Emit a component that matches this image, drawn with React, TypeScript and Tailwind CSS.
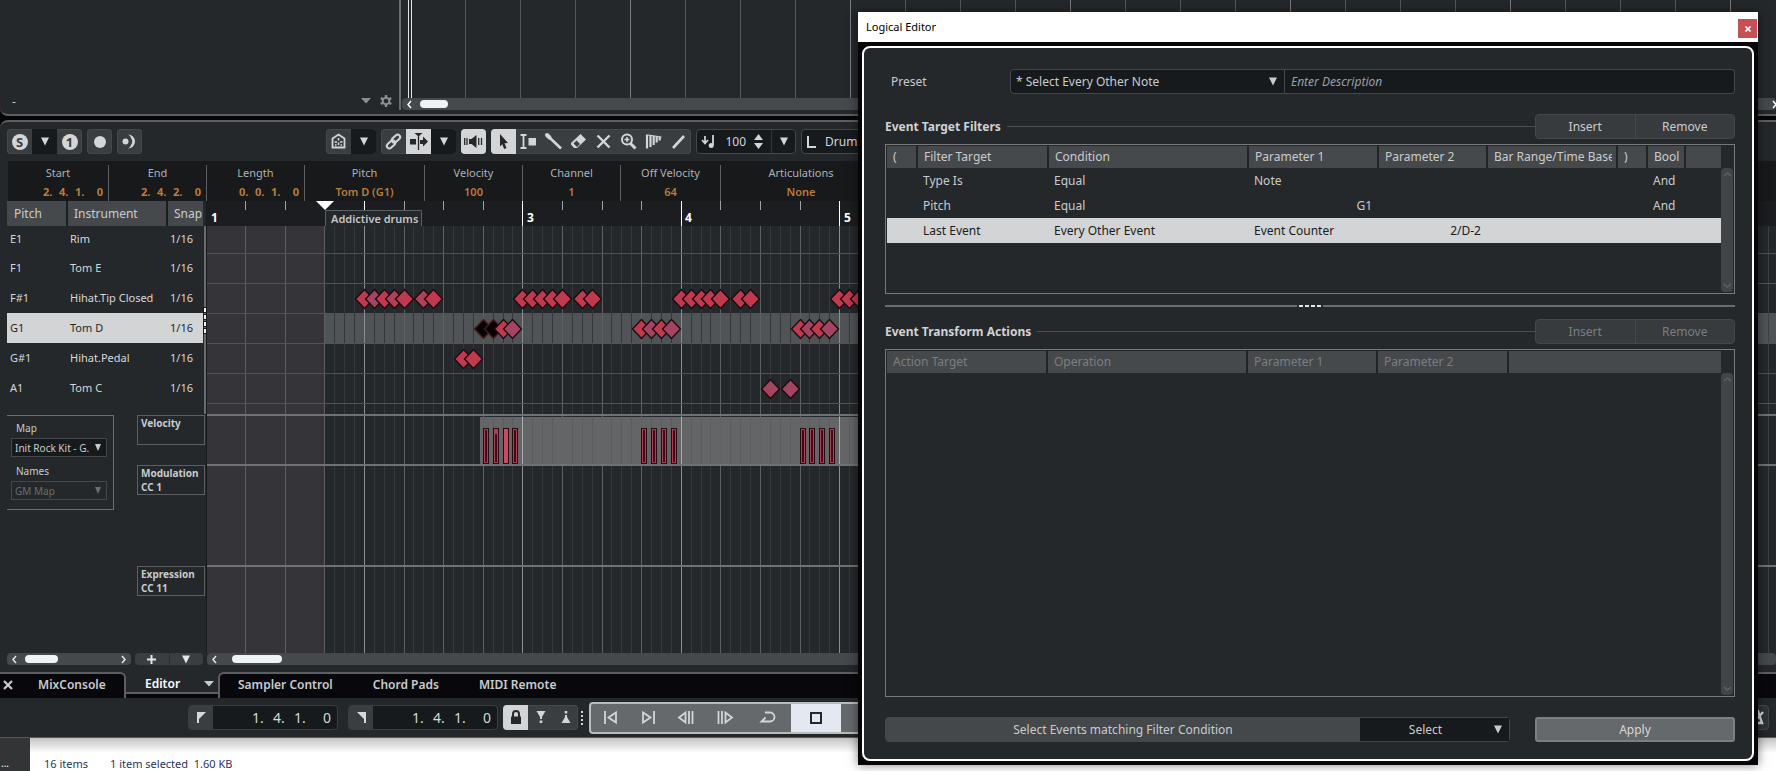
import React from "react";

const BEAT = 39.6;
const STEP = BEAT / 4;
const ORIGIN = -1.5;
const PART_START = 118;

const beatX = (beat: number) => Math.round(ORIGIN + beat * BEAT);
const stepX = (bar: number, step: number) => Math.round(ORIGIN + (bar - 1) * BEAT * 4 + step * STEP);

function Caret({ className = "" }: { className?: string }) {
  return (
    <svg className={"pointer-events-none shrink-0 " + className} width="8" height="9" viewBox="0 0 8 9" fill="currentColor" aria-hidden="true">
      <path d="M0 .5h8L4 8.5z" />
    </svg>
  );
}

function Chevron({ dir }: { dir: "left" | "right" | "up" | "down" }) {
  const d = {
    left: "M6 1L3 4.500L6 8",
    right: "M3 1l3 3.500L3 8",
    up: "M1 6l3.500-3L8 6",
    down: "M1 3l3.500 3L8 3",
  }[dir];
  return (
    <svg width="9" height="9" viewBox="0 0 9 9" fill="none" stroke="currentColor" strokeWidth="1.5" aria-hidden="true">
      <path d={d} />
    </svg>
  );
}

function Tool({
  label,
  active = false,
  dark = false,
  children,
}: {
  label: string;
  active?: boolean;
  dark?: boolean;
  children: React.ReactNode;
}) {
  const tone = active ? "bg-[#d3d5d7] text-[#24282b]" : dark ? "bg-[#171a1d] text-[#d3d5d7]" : "text-[#d3d5d7]";
  return (
    <button type="button" aria-label={label} className={"flex h-full flex-1 items-center justify-center " + tone}>
      {children}
    </button>
  );
}

function Group({ width, children }: { width: string; children: React.ReactNode }) {
  return (
    <div className={"flex h-[25px] shrink-0 overflow-hidden rounded-sm bg-[#3a3e41] ring-1 ring-inset ring-[#44484b] " + width}>
      {children}
    </div>
  );
}

const svgProps = { width: 19, height: 19, viewBox: "0 0 19 19", fill: "none", stroke: "currentColor", strokeWidth: 2, "aria-hidden": true } as const;

function EditorToolbar() {
  return (
    <div className="flex h-[39px] items-center gap-[5px] pl-[7px]">
      <Group width="w-[75px]">
        <Tool label="Solo editor">
          <span className="flex size-4 items-center justify-center rounded-full bg-[#d3d5d7] text-[13px] leading-4 font-bold text-[#3a3e41]">S</span>
        </Tool>
        <Tool label="Solo options" dark><Caret /></Tool>
        <Tool label="Record in editor">
          <span className="flex size-4 items-center justify-center rounded-full bg-[#d3d5d7] text-[13px] leading-4 font-bold text-[#3a3e41]">1</span>
        </Tool>
      </Group>
      <Group width="w-[25px]">
        <Tool label="Record"><span className="size-3 rounded-full bg-[#d3d5d7]" /></Tool>
      </Group>
      <Group width="w-[25px]">
        <Tool label="Retrospective record">
          <svg {...svgProps}>
            <path d="M8 2.500a7 7 0 1 1 0 14a5 5 0 0 0 3-3.500a6 6 0 0 0 0-7a5 5 0 0 0-3-3.500z" fill="currentColor" stroke="none" />
            <circle cx="5.500" cy="9.500" r="3" fill="currentColor" stroke="none" />
          </svg>
        </Tool>
      </Group>
      <div className="w-[174px]" />
      <Group width="w-[50px]">
        <Tool label="Acoustic feedback">
          <svg {...svgProps}><path d="M3.500 15.500v-9l6-4 6 4v9z" strokeWidth="1.800" /><path d="M9.500 6v2.500M9.500 10.500v2.500M5.500 10h2.500M11 10h2.500M6 13h1.500M11.500 13h1.500" strokeWidth="1.600" /></svg>
        </Tool>
        <Tool label="Feedback options" dark><Caret /></Tool>
      </Group>
      <Group width="w-[75px]">
        <Tool label="Link">
          <svg {...svgProps}><g transform="rotate(-42 9.500 9.500)"><rect x="1" y="7.500" width="9.500" height="5" rx="2.500" /><rect x="8.500" y="6.500" width="9.500" height="5" rx="2.500" /></g></svg>
        </Tool>
        <Tool label="Auto-scroll" active>
          <svg {...svgProps}><path d="M1 7h6v5.500H1zM11 8h3V4.500l5 5-5 5V12h-3zM5.500 1h8L9.500 4.500z" fill="currentColor" stroke="none" /><path d="M9.500 2v16" strokeWidth="1.300" /></svg>
        </Tool>
        <Tool label="Auto-scroll options" dark><Caret /></Tool>
      </Group>
      <Group width="w-[25px]">
        <Tool label="Acoustic feedback on" active>
          <svg {...svgProps}><path d="M5 7h2.500L12.500 3v13l-5-4H5z" fill="currentColor" stroke="none" /><path d="M.700 6v7M3 6v7M14.700 6v7M17.500 6v7" strokeWidth="1.300" /></svg>
        </Tool>
      </Group>
      <Group width="w-[200px]">
        <Tool label="Object selection" active>
          <svg {...svgProps}><path d="M6 2l8 9-3.500.300 2 4.700-2.300 1-2-4.800L6 14.500z" fill="currentColor" stroke="none" /></svg>
        </Tool>
        <Tool label="Trim">
          <svg {...svgProps}><path d="M1.500 3h6M1.500 16h6M4.500 3v13" strokeWidth="1.800" /><path d="M9.500 6h7.500v7.500H9.500z" fill="currentColor" stroke="none" /></svg>
        </Tool>
        <Tool label="Drumstick">
          <svg {...svgProps}><path d="M3 3l2.500 2.500" strokeWidth="4" strokeLinecap="round" /><path d="M6 6l11 10.500" strokeWidth="2.600" /></svg>
        </Tool>
        <Tool label="Erase">
          <svg {...svgProps}><path d="M11.500 2L17 7.500L8 16H5L2 12.500V11z" fill="currentColor" stroke="none" /><path d="M7.500 8.500l3.500 3.500-3 3-3.500-3.500z" fill="#3a3e41" stroke="none" /></svg>
        </Tool>
        <Tool label="Mute"><svg {...svgProps}><path d="M3.500 3.500l12 12M15.500 3.500l-12 12" strokeWidth="2.400" /></svg></Tool>
        <Tool label="Zoom">
          <svg {...svgProps}><circle cx="8" cy="7.500" r="5" /><path d="M11.500 11.500l5 5" strokeWidth="3" /><path d="M8 5v5M5.500 7.500h5" strokeWidth="1.600" /></svg>
        </Tool>
        <Tool label="Time warp">
          <svg {...svgProps}><path d="M3 3v13.500M6.500 3v12M9.700 4v9M12.700 4.500v6M15.700 5v3.500" strokeWidth="2.200" /><path d="M2 3h2l13.500 2" strokeWidth="1.200" /></svg>
        </Tool>
        <Tool label="Line"><svg {...svgProps}><path d="M4 16L15 4" strokeWidth="2.600" /></svg></Tool>
      </Group>
      <div className="flex h-[25px] w-[100px] shrink-0 items-center rounded-sm border border-[#44484b] bg-[#171a1d] text-[#d3d5d7]">
        <svg {...svgProps} className="ml-[3px]"><path d="M5 4v6M2 8l3 3.500L8 8" strokeWidth="1.700" /><path d="M13 3v10" strokeWidth="1.800" /><circle cx="11.200" cy="13.500" r="2.500" fill="currentColor" stroke="none" /></svg>
        <input aria-label="Insert velocity" defaultValue="100" className="ml-px w-[26px] bg-transparent text-right text-[12px] leading-5 outline-none" />
        <svg className="ml-2" width="9" height="15" viewBox="0 0 9 15" fill="currentColor" aria-hidden="true"><path d="M4.500 0L9 6H0zM4.500 15L0 9h9z" /></svg>
        <button type="button" aria-label="Velocity presets" className="ml-auto flex h-full w-6 items-center justify-center border-l border-[#33373a]"><Caret /></button>
      </div>
      <div className="flex h-[25px] w-[160px] shrink-0 items-center gap-2 rounded-sm border border-[#44484b] bg-[#171a1d] pl-1 text-[#d3d5d7]">
        <svg width="11" height="14" viewBox="0 0 11 14" fill="none" stroke="currentColor" strokeWidth="2" aria-hidden="true"><path d="M2 1v11h8" /></svg>
        <span className="text-[12px]">Drum</span>
      </div>
    </div>
  );
}

function Position({ parts, cell }: { parts: string[]; cell: string }) {
  return (
    <span className="flex">
      {parts.map((p, i) => (
        <span key={i} className={cell}>{p}</span>
      ))}
    </span>
  );
}

function InfoLine() {
  const positions = [
    { label: "Start", parts: ["2.", "4.", "1."], width: "w-[101px]" },
    { label: "End", parts: ["2.", "4.", "2."], width: "w-[98px]" },
    { label: "Length", parts: ["0.", "0.", "1."], width: "w-[98px]" },
  ];
  const values = [
    { label: "Pitch", value: "Tom D (G1)", width: "w-[120px]" },
    { label: "Velocity", value: "100", width: "w-[98px]" },
    { label: "Channel", value: "1", width: "w-[98px]" },
    { label: "Off Velocity", value: "64", width: "w-[100px]" },
    { label: "Articulations", value: "None", width: "w-[161px]" },
  ];
  return (
    <div className="ml-2 flex h-10 bg-[#17191b] pt-1 text-[11px] leading-4 text-[#aeb1b3]">
      {positions.map((p) => (
        <div key={p.label} className={"flex shrink-0 flex-col gap-[3px] border-r border-[#5d6062] " + p.width}>
          <span className="text-center">{p.label}</span>
          <span className="flex justify-end pr-[5px] font-bold text-[#bd7c3a]">
            <Position parts={p.parts} cell="w-4" />
            <span className="w-3 text-right">0</span>
          </span>
        </div>
      ))}
      {values.map((v) => (
        <div key={v.label} className={"flex shrink-0 flex-col gap-[3px] border-r border-[#5d6062] text-center " + v.width}>
          <span>{v.label}</span>
          <span className="font-semibold text-[#bd7c3a]">{v.value}</span>
        </div>
      ))}
    </div>
  );
}

const drums = [
  ["E1", "Rim"],
  ["F1", "Tom E"],
  ["F#1", "Hihat.Tip Closed"],
  ["G1", "Tom D"],
  ["G#1", "Hihat.Pedal"],
  ["A1", "Tom C"],
];

function DrumList() {
  return (
    <table className="w-[196px] table-fixed self-start border-separate border-spacing-0 text-left text-[11px]">
      <colgroup>
        <col className="w-[61px]" />
        <col className="w-[100px]" />
        <col className="w-[35px]" />
      </colgroup>
      <thead>
        <tr className="h-[25px] text-[12px] leading-5 text-[#c9cbcd]">
          <th className="border-r-2 border-[#1c1f22] bg-[#46494c] p-0 pl-[7px] font-normal">Pitch</th>
          <th className="border-r-2 border-[#1c1f22] bg-[#46494c] p-0 pl-[6px] font-normal">Instrument</th>
          <th className="overflow-hidden bg-[#46494c] p-0 pl-[6px] font-normal whitespace-nowrap">Snap</th>
        </tr>
      </thead>
      <tbody>
        {drums.map(([pitch, name], i) => (
          <tr key={pitch} className={(i === 0 ? "h-[27px] " : "h-[30px] ") + (pitch === "G1" ? "bg-[#d3d4d5] text-[#24282b]" : "text-[#d6d8d9]")}>
            <td className="p-0 pl-[3px]">{pitch}</td>
            <td className="p-0 pl-[2px] whitespace-nowrap">{name}</td>
            <td className="p-0 pl-[2px]">1/16</td>
          </tr>
        ))}
      </tbody>
    </table>
  );
}

function GridLines({ height, dark = false }: { height: number; dark?: boolean }) {
  const steps = [];
  for (let k = 13; k < 156; k++) {
    if (k % 4 === 0) continue;
    steps.push(Math.round(ORIGIN + k * STEP));
  }
  const beats = [];
  for (let k = 1; k < 39; k++) beats.push(k);
  return (
    <g shapeRendering="crispEdges">
      {steps.map((x) => <rect key={x} x={x} y="0" width="1" height={height} fill={dark ? "#33373a" : "#35393c"} />)}
      {beats.map((k) => <rect key={k} x={beatX(k)} y="0" width="1" height={height} fill={k % 4 === 0 ? "#8b8e90" : "#5c6062"} />)}
      <rect x="1561" y="0" width="1" height={height} fill="#3d4143" />
    </g>
  );
}

function Ruler() {
  const beats = [];
  for (let k = 1; k < 20; k++) beats.push(k);
  return (
    <svg className="block h-[25px] w-full shrink-0 bg-[#1b1d20]" aria-label="Ruler">
      <g shapeRendering="crispEdges">
        {beats.map((k) => {
          if (k === 3) return null;
          const bar = k % 4 === 0 && k > 4;
          return <rect key={k} x={beatX(k)} y="0" width="1" height={bar ? 25 : 9} fill={k % 4 === 0 ? "#fff" : "#9fa2a4"} />;
        })}
      </g>
      <path d="M109 0h18l-9 9z" fill="#fff" />
      <path d="M118.500 25V9.500h96V25" fill="#24282b" stroke="#5c6062" />
      <text x="124" y="22" className="text-[11px] font-semibold" fill="#c3c5c7">Addictive drums</text>
      <g className="text-[12px] font-bold" fill="#fff">
        <text x="4" y="21">1</text>
        <text x="320" y="21">3</text>
        <text x="478" y="21">4</text>
        <text x="637" y="21">5</text>
      </g>
    </svg>
  );
}

const RED = "#c03a4f";
const PLUM = "#a34463";
type Note = { x: number; y: number; fill: string };

const notes: Note[] = [];
[2, 3, 4, 5].forEach((bar) =>
  [0, 1, 2, 3, 4, 6, 7].forEach((s) =>
    notes.push({ x: stepX(bar, s), y: 73, fill: bar === 2 && s === 1 ? PLUM : bar === 2 && (s === 3 || s === 6) ? "#b03f58" : RED }),
  ),
);
[2, 3, 4].forEach((bar) =>
  [12, 13, 14, 15].forEach((s) =>
    notes.push({ x: stepX(bar, s), y: 103, fill: bar === 2 && s < 14 ? "#080404" : s % 2 === 0 ? RED : PLUM }),
  ),
);
[10, 11].forEach((s) => notes.push({ x: stepX(2, s), y: 133, fill: RED }));
[9, 11].forEach((s) => notes.push({ x: stepX(4, s), y: 163, fill: PLUM }));

function NoteGrid() {
  return (
    <svg className="block h-[188px] w-full shrink-0 bg-[#24282b]" aria-label="Drum notes">
      <rect width={PART_START} height="188" fill="#353539" />
      <GridLines height={188} />
      <g shapeRendering="crispEdges">
        {[27, 57, 87, 117, 147, 177].map((y) => <rect key={y} y={y} width="100%" height="1" fill="#505457" />)}
      </g>
      <svg x={PART_START} y="87" width="100%" height="30">
        <rect width="100%" height="30" fill="#505456" />
        <g transform={`translate(${-PART_START} 0)`}><GridLines height={30} dark /></g>
      </svg>
      {notes.map((n, i) => (
        <path
          key={i}
          d={`M${n.x - 8.5} ${n.y}L${n.x + 0.5} ${n.y - 9.5}L${n.x + 9.5} ${n.y}L${n.x + 0.5} ${n.y + 9.5}z`}
          fill={n.fill}
          stroke={n.fill === "#080404" ? "#4a1a22" : "#1d0a0e"}
          strokeWidth="1.3"
        />
      ))}
    </svg>
  );
}

function VelocityLane() {
  const bars: { x: number; kind: "hollow" | "split" | "solid" }[] = [];
  [2, 3, 4].forEach((bar) =>
    [12, 13, 14, 15].forEach((s) =>
      bars.push({ x: stepX(bar, s), kind: bar === 2 && s === 13 ? "split" : bar === 2 && s === 14 ? "solid" : "hollow" }),
    ),
  );
  return (
    <svg className="block h-12 w-full shrink-0 bg-[#24282b]" aria-label="Velocity">
      <rect width={PART_START} height="48" fill="#353539" />
      <GridLines height={48} />
      <rect x="273" y="1" width="1220" height="47" fill="#646567" />
      <g opacity="0.200"><svg x="273" width="1220" height="48"><g transform="translate(-273 0)"><GridLines height={48} /></g></svg></g>
      <g fill="#a9abac" shapeRendering="crispEdges">
        {[8, 12, 16].map((k) => <rect key={k} x={beatX(k)} y="1" width="1" height="47" />)}
      </g>
      <g shapeRendering="crispEdges">
        {bars.map((b) => (
          <g key={b.x}>
            <rect x={b.x} y="12" width="6" height="36" fill="#2a0a10" />
            <rect x={b.x + 1} y="13" width="4" height="34" fill="#b03f54" />
            {b.kind === "solid" && <rect x={b.x + 1} y="13" width="4" height="34" fill="#cc4a62" />}
            {b.kind !== "solid" && <rect x={b.x + 2} y={b.kind === "split" ? 18 : 14} width="2" height={b.kind === "split" ? 28 : 32} fill="#3c0c18" />}
          </g>
        ))}
      </g>
    </svg>
  );
}

function EmptyLane({ className }: { className: string }) {
  return (
    <svg className={"block w-full bg-[#24282b] " + className} aria-hidden="true">
      <rect width={PART_START} height="100%" fill="#353539" />
      <GridLines height={400} />
    </svg>
  );
}

function SmallSelect({ id, label, value, disabled = false }: { id: string; label: string; value: string; disabled?: boolean }) {
  return (
    <div className="flex flex-col">
      <label htmlFor={id} className="pt-[2px] pl-[5px] text-[10px] leading-5 text-[#c9cbcd]">{label}</label>
      <div className={"relative flex h-[19px] items-center border border-[#44484b] " + (disabled ? "text-[#6b6e70]" : "bg-[#171a1d] text-[#c9cbcd]")}>
        <select id={id} disabled={disabled} className="w-full appearance-none bg-transparent pl-[3px] text-[10px] leading-4 outline-none">
          <option>{value}</option>
        </select>
        <svg className="pointer-events-none absolute right-[5px]" width="6" height="7" viewBox="0 0 6 7" fill="currentColor" aria-hidden="true"><path d="M0 0h6L3 7z" /></svg>
      </div>
    </div>
  );
}

function LaneLabel({ className, title, sub = "" }: { className: string; title: string; sub?: string }) {
  return (
    <div className={className}>
      <div className="h-[30px] border border-[#5c6062] pl-[3px] text-[10px] leading-[14px] font-bold whitespace-nowrap text-[#c9cbcd]">
        <div>{title}</div>
        <div>{sub}</div>
      </div>
    </div>
  );
}

function ArrangePanel() {
  const cols = [];
  for (let k = 1; k < 25; k++) cols.push(k);
  return (
    <section className="flex h-[116px] shrink-0 overflow-hidden rounded-bl-lg border-b-2 border-[#5c5e60] bg-[#24282b]">
      <div className="mb-1 flex w-[401px] shrink-0 items-end border-r-2 border-[#6a6c6e] text-[#8c8f91]">
        <span className="pl-3 text-[12px] leading-4 text-[#c9cbcd]">-</span>
        <svg className="mb-[6px] ml-auto" width="10" height="6" viewBox="0 0 10 6" fill="currentColor" aria-hidden="true"><path d="M0 0h10L5 5.500z" /></svg>
        <button type="button" aria-label="Settings" className="mr-[7px] mb-[3px] ml-[9px]">
          <svg width="12" height="12" viewBox="0 0 12 12" fill="none" stroke="currentColor" aria-hidden="true">
            <circle cx="6" cy="6" r="3.300" strokeWidth="2" />
            <path d="M6 0v2.500M6 9.500v2.500M.800 3l2 1.200M9.200 7.800l2 1.200M.800 9l2-1.200M9.200 4.200l2-1.200" strokeWidth="2.400" />
          </svg>
        </button>
      </div>
      <div className="flex min-w-0 flex-1 flex-col">
        <svg className="block h-[98px] w-full" aria-hidden="true">
          <g shapeRendering="crispEdges">
            <rect x="7" width="1" height="98" fill="#e4e5e6" />
            <rect x="10" width="1" height="98" fill="#e4e5e6" />
            {cols.map((k) => <rect key={k} x={9 + k * 55} width="1" height="98" fill={k % 4 === 0 ? "#7a7d7f" : "#54585a"} />)}
          </g>
        </svg>
        <div className="ml-px flex h-3 items-center rounded-sm bg-[#46494c] text-white">
          <button type="button" aria-label="Scroll left" className="w-[18px] pl-[3px]"><Chevron dir="left" /></button>
          <span className="h-2 w-7 rounded-sm bg-[#f1f2f3]" />
          <button type="button" aria-label="Scroll right" className="-mr-[3px] ml-auto"><Chevron dir="right" /></button>
        </div>
      </div>
    </section>
  );
}

function DrumEditor() {
  return (
    <section className="mt-1 flex min-h-0 flex-1 flex-col rounded-tl-lg border-t-2 border-[#5c5e60] bg-[#24282b]">
      <EditorToolbar />
      <InfoLine />
      <div className="flex min-h-0 flex-1 overflow-hidden">
        <div className="flex w-[207px] shrink-0 flex-col border-r border-[#17191b] pl-[7px]">
          <div className="flex h-[213px]">
            <DrumList />
            <div className="mt-[25px] ml-px flex w-[2px] flex-col gap-[3px] bg-[#6a6c6e] pt-[82px]">
              {[0, 1, 2, 3].map((k) => <span key={k} className="h-1 bg-[#f1f2f3] outline-1 outline-[#17191b]" />)}
            </div>
          </div>
          <div className="flex pt-px">
            <div className="flex h-[95px] w-[107px] flex-col gap-[2px] border-y border-r border-[#6a6c6e] pr-[6px] pl-1">
              <SmallSelect id="map" label="Map" value="Init Rock Kit - G." />
              <SmallSelect id="names" label="Names" value="GM Map" disabled />
            </div>
            <div className="mr-px ml-auto w-[68px]">
              <LaneLabel className="h-[50px]" title="Velocity" />
              <LaneLabel className="h-[101px]" title="Modulation" sub="CC 1" />
              <LaneLabel className="" title="Expression" sub="CC 11" />
            </div>
          </div>
        </div>
        <div className="flex min-w-0 flex-1 flex-col">
          <Ruler />
          <NoteGrid />
          <div className="h-[2px] shrink-0 bg-[#6f7173]" />
          <VelocityLane />
          <div className="h-[2px] shrink-0 bg-[#6f7173]" />
          <EmptyLane className="h-[99px] shrink-0" />
          <div className="h-[2px] shrink-0 bg-[#6f7173]" />
          <EmptyLane className="min-h-0 flex-1" />
        </div>
      </div>
      <div className="mb-[7px] flex h-3 shrink-0 items-stretch pl-[7px] text-[#e4e5e6]">
        <div className="flex w-[124px] items-center rounded-sm bg-[#46494c] px-[3px]">
          <Chevron dir="left" />
          <span className="ml-[6px] h-2 w-[33px] rounded-sm bg-[#f1f2f3]" />
          <span className="ml-auto"><Chevron dir="right" /></span>
        </div>
        <div className="mr-1 ml-1 flex w-[68px] rounded-sm bg-[#3a3e41]">
          <button type="button" aria-label="Add controller lane" className="flex flex-1 items-center justify-center border-r border-[#2b2f32]">
            <svg width="9" height="9" viewBox="0 0 9 9" stroke="currentColor" strokeWidth="2" aria-hidden="true"><path d="M4.500 0v9M0 4.500h9" /></svg>
          </button>
          <button type="button" aria-label="Lane presets" className="flex flex-1 items-center justify-center"><Caret /></button>
        </div>
        <div className="flex flex-1 items-center rounded-sm bg-[#46494c] pl-[3px]">
          <Chevron dir="left" />
          <span className="ml-[13px] h-2 w-[50px] rounded-sm bg-[#f1f2f3]" />
        </div>
      </div>
    </section>
  );
}

function TabBar() {
  return (
    <nav className="flex h-[26px] shrink-0 bg-[#24282b] text-[12px] leading-[22px] font-semibold text-[#c9cbcd]">
      <div className="flex w-[126px] shrink-0 items-center rounded-tr-md border-t-2 border-r-2 border-[#5c5e60] bg-[#08080c] pb-[2px]">
        <button type="button" aria-label="Close lower zone" className="pl-[3px]">
          <svg width="10" height="10" viewBox="0 0 10 10" stroke="currentColor" strokeWidth="2.200" aria-hidden="true"><path d="M1 1l8 8M9 1L1 9" /></svg>
        </button>
        <a href="#mixconsole" className="pl-[25px]">MixConsole</a>
      </div>
      <div className="w-[92px] shrink-0 bg-[#08080c]">
        <div className="flex h-[22px] items-center border-b-2 border-[#5c5e60] bg-[#24282b] pt-[4px] text-white">
          <a href="#editor" className="flex-1 pl-[19px]">Editor</a>
          <svg className="mr-[4px] text-[#c9cbcd]" width="10" height="6" viewBox="0 0 10 6" fill="currentColor" aria-hidden="true"><path d="M0 0h10L5 5.500z" /></svg>
        </div>
      </div>
      <div className="flex min-w-0 flex-1 items-center gap-10 rounded-tl-md border-t-2 border-l-2 border-[#5c5e60] bg-[#08080c] pb-[2px] pl-[18px]">
        <a href="#sampler">Sampler Control</a>
        <a href="#chords">Chord Pads</a>
        <a href="#midi">MIDI Remote</a>
      </div>
    </nav>
  );
}

function Locator({ side }: { side: "left" | "right" }) {
  return (
    <div className="mr-[10px] flex h-[25px] w-[150px] shrink-0 items-center rounded-sm border border-[#3a3e41] bg-[#171a1d] text-[14px] leading-6 text-[#d6d8d9]">
      <button type="button" aria-label={side + " locator"} className="flex h-full w-6 items-center justify-center bg-[#3a3e41]">
        <svg width="9" height="11" viewBox="0 0 9 11" fill="currentColor" aria-hidden="true">
          <path d={side === "left" ? "M0 0h9L2 7v4H0z" : "M9 0H0l7 7v4h2z"} />
        </svg>
      </button>
      <span className="ml-auto flex pr-[6px]">
        <Position parts={["1.", "4.", "1."]} cell="w-[21px]" />
        <span className="w-4 text-right">0</span>
      </span>
    </div>
  );
}

function TransportBar() {
  const icons: [string, string][] = [
    ["Go to start", "M4 3v13M15 4.500v10L7.500 9.500z"],
    ["Go to end", "M15 3v13M4 4.500v10l7.500-5z"],
    ["Rewind", "M8.500 4.500v10L2 9.500zM12 3v13M15.500 3v13"],
    ["Forward", "M10.500 4.500v10l6.500-5zM3.500 3v13M7 3v13"],
  ];
  return (
    <footer className="flex h-10 shrink-0 items-center border-b border-[#55585a] bg-[#24282b] pl-[188px] text-[#d3d5d7]">
      <Locator side="left" />
      <Locator side="right" />
      <div className="-ml-[5px]">
        <Group width="w-[75px]">
          <Tool label="Lock punch points" active>
            <svg width="12" height="15" viewBox="0 0 12 15" fill="none" stroke="currentColor" strokeWidth="2" aria-hidden="true"><path d="M3 7V4a3 3 0 0 1 6 0v3" /><path d="M1 6.500h10V14H1z" fill="currentColor" stroke="none" /></svg>
          </Tool>
          <Tool label="Punch in"><svg width="10" height="13" viewBox="0 0 10 13" fill="currentColor" aria-hidden="true"><path d="M.500 0h9L6 6v2H4V6zM3.700 9.500h2.600v2.500H3.700z" /></svg></Tool>
          <Tool label="Punch out"><svg width="10" height="13" viewBox="0 0 10 13" fill="currentColor" aria-hidden="true"><path d="M3.700 0h2.600v2.500H3.700zM4 4h2v2l3.500 6h-9L4 6z" /></svg></Tool>
        </Group>
      </div>
      <svg className="mx-[2px] shrink-0" width="7" height="14" viewBox="0 0 7 14" fill="currentColor" aria-hidden="true"><path d="M1 0h2v2H1zM1 4h2v2H1zM1 8h2v2H1zM1 12h2v2H1z" /></svg>
      <div className="flex h-8 w-[330px] shrink-0 rounded-sm border-2 border-[#b9bbbc] bg-[#65696c]">
        {icons.map(([label, d]) => (
          <button key={label} type="button" aria-label={label} className="flex h-full w-[38px] items-center justify-center">
            <svg {...svgProps}><path d={d} strokeWidth="1.800" /></svg>
          </button>
        ))}
        <button type="button" aria-label="Cycle" className="flex h-full w-12 items-center justify-center">
          <svg {...svgProps}><path d="M7 4.500h5a4.500 4.500 0 0 1 0 9H3.500L7.500 9.500M6 13.500h3" strokeWidth="1.800" /></svg>
        </button>
        <button type="button" aria-label="Stop" className="flex h-full w-[50px] items-center justify-center bg-[#e3e8f1]">
          <span className="size-3 border-2 border-[#24282b]" />
        </button>
      </div>
      <button type="button" aria-label="Metronome" className="mr-[7px] ml-auto flex h-[25px] w-[25px] items-center justify-center rounded-sm border border-[#44484b] bg-[#2f3336]">
        <svg {...svgProps}><path d="M6 3h5l4 12H3zM9 12l7-8" strokeWidth="2.400" /></svg>
      </button>
    </footer>
  );
}

function ExplorerStatus() {
  return (
    <div className="flex h-[33px] shrink-0 bg-[#333436]">
      <div className="w-[30px] pt-[19px] pl-px text-[10px] leading-3 text-white">...</div>
      <div className="flex flex-1 gap-[22px] bg-white bg-linear-to-b from-[#c4c4c4] to-white to-45% pt-[18px] pl-[14px] text-[11px] leading-[15px] text-[#27375e]">
        <span>16 items</span>
        <span>1 item selected&nbsp; 1.60 KB</span>
      </div>
    </div>
  );
}

function Th({ children, muted = false, last = false }: { children?: React.ReactNode; muted?: boolean; last?: boolean }) {
  return (
    <th className={"h-[22px] bg-[#46494c] p-0 pr-1 pl-[6px] font-normal " + (last ? "" : "border-r-2 border-[#212427] ") + (muted ? "text-[#7b7e80]" : "text-[#c9cbcd]")}>
      <div className="overflow-hidden whitespace-nowrap">{children}</div>
    </th>
  );
}

function ListFrame({ className, children }: { className: string; children: React.ReactNode }) {
  return (
    <div className={"flex border border-[#77797b] p-px " + className}>
      <div className="min-w-0 flex-1">{children}</div>
      <div className="mt-[22px] flex w-3 flex-col items-center justify-between rounded-sm bg-[#414548] py-[2px] text-[#5f6264]">
        <Chevron dir="up" />
        <Chevron dir="down" />
      </div>
    </div>
  );
}

function SectionHead({ title, muted = false }: { title: string; muted?: boolean }) {
  return (
    <div className="flex h-[25px] items-center">
      <h2 className="pr-[6px] text-[12px] leading-5 font-bold text-[#d0d2d3]">{title}</h2>
      <div className="h-px flex-1 bg-[#4b4f51]" />
      <div className={"flex h-full w-[200px] rounded-sm border border-[#44484b] bg-[#373b3e] text-[12px] " + (muted ? "text-[#7b7e80]" : "text-[#c9cbcd]")}>
        <button type="button" disabled={muted} className="flex-1 border-r border-[#44484b]">Insert</button>
        <button type="button" disabled={muted} className="flex-1">Remove</button>
      </div>
    </div>
  );
}

function LogicalEditor() {
  return (
    <div role="dialog" aria-label="Logical Editor" className="absolute top-3 right-[18px] bottom-[6px] left-[858px] flex flex-col bg-[#060608] text-[12px] text-[#c9cbcd] shadow-[0_0_10px_rgba(0,0,0,0.5)]">
      <header className="flex h-[30px] shrink-0 items-center justify-between bg-white pr-px pl-2 text-black">
        <h1 className="text-[11px] leading-5">Logical Editor</h1>
        <button type="button" aria-label="Close" className="mt-[3px] flex size-[19px] items-center justify-center bg-[#c75054] text-white">
          <svg width="6" height="6" viewBox="0 0 6 6" stroke="currentColor" strokeWidth="1.600" aria-hidden="true"><path d="M.500.500l5 5M5.500.500l-5 5" /></svg>
        </button>
      </header>
      <div className="m-1 flex min-h-0 flex-1 flex-col rounded-lg border-2 border-white bg-[#24282b] px-[17px] pt-[21px] pb-[17px] pl-[21px]">
        <div className="mb-5 flex h-[25px] items-center">
          <label htmlFor="preset" className="w-[125px] pl-[6px] text-[12px]">Preset</label>
          <div className="relative flex h-full w-[275px] items-center rounded-l-sm border border-[#44484b] bg-[#171a1d]">
            <select id="preset" className="h-full w-full appearance-none pl-[5px] text-[12px] outline-none">
              <option>* Select Every Other Note</option>
            </select>
            <Caret className="absolute right-[7px]" />
          </div>
          <input aria-label="Description" placeholder="Enter Description" className="h-full min-w-0 flex-1 rounded-r-sm border border-l-0 border-[#44484b] bg-[#171a1d] pl-[6px] text-[12px] italic outline-none placeholder:text-[#9c9fa1]" />
        </div>

        <SectionHead title="Event Target Filters" />
        <ListFrame className="mt-[5px] h-[150px] shrink-0">
          <table className="w-full table-fixed border-separate border-spacing-0 text-left text-[12px] leading-5">
            <colgroup>
              <col className="w-[31px]" />
              <col className="w-[131px]" />
              <col className="w-[200px]" />
              <col className="w-[130px]" />
              <col className="w-[109px]" />
              <col className="w-[130px]" />
              <col className="w-[30px]" />
              <col className="w-[38px]" />
              <col />
            </colgroup>
            <thead>
              <tr>
                <Th>(</Th>
                <Th>Filter Target</Th>
                <Th>Condition</Th>
                <Th>Parameter 1</Th>
                <Th>Parameter 2</Th>
                <Th>Bar Range/Time Base</Th>
                <Th>)</Th>
                <Th>Bool</Th>
                <Th last />
              </tr>
            </thead>
            <tbody className="[&_td]:p-0 [&_td]:pt-px [&_td]:pr-[7px] [&_td]:pl-[5px] [&_td]:whitespace-nowrap">
              <tr className="h-[25px]">
                <td /><td>Type Is</td><td>Equal</td><td>Note</td><td /><td /><td /><td>And</td><td />
              </tr>
              <tr className="h-[25px]">
                <td /><td>Pitch</td><td>Equal</td><td className="text-right">G1</td><td /><td /><td /><td>And</td><td />
              </tr>
              <tr className="h-[25px] bg-[#d3d4d5] text-[#1a1c1e]">
                <td /><td>Last Event</td><td>Every Other Event</td><td>Event Counter</td><td className="text-right">2/D-2</td><td /><td /><td /><td />
              </tr>
            </tbody>
          </table>
        </ListFrame>

        <div className="mt-[11px] mb-3 flex h-[2px] shrink-0 items-center gap-[2px]" role="separator">
          <span className="h-[2px] flex-1 bg-[#6a6c6e]" />
          {[0, 1, 2, 3].map((k) => <span key={k} className="h-[2px] w-1 bg-[#e4e5e6]" />)}
          <span className="h-[2px] flex-1 bg-[#6a6c6e]" />
        </div>

        <SectionHead title="Event Transform Actions" muted />
        <ListFrame className="mt-[5px] min-h-0 flex-1">
          <table className="w-full table-fixed border-separate border-spacing-0 text-left text-[12px] leading-5">
            <colgroup>
              <col className="w-[161px]" />
              <col className="w-[200px]" />
              <col className="w-[130px]" />
              <col className="w-[131px]" />
              <col />
            </colgroup>
            <thead>
              <tr>
                <Th muted>Action Target</Th>
                <Th muted>Operation</Th>
                <Th muted>Parameter 1</Th>
                <Th muted>Parameter 2</Th>
                <Th last />
              </tr>
            </thead>
          </table>
        </ListFrame>

        <div className="mt-5 flex h-[25px] shrink-0 gap-[25px]">
          <div className="flex min-w-0 flex-1 rounded-sm border border-[#44484b] bg-[#44484b]">
            <label htmlFor="function" className="flex flex-1 items-center justify-center">Select Events matching Filter Condition</label>
            <div className="relative flex w-[149px] items-center bg-[#171a1d]">
              <select id="function" className="h-full w-full appearance-none pr-[18px] text-center text-[12px] outline-none [text-align-last:center]">
                <option>Select</option>
              </select>
              <Caret className="absolute right-[7px]" />
            </div>
          </div>
          <button type="button" className="w-[200px] rounded-[3px] border-2 border-[#7d8082] bg-[#65696c] text-[#d6d8d9]">Apply</button>
        </div>
      </div>
    </div>
  );
}

export default function App() {
  return (
    <main className="relative flex h-screen flex-col overflow-hidden bg-[#060608] font-['Noto_Sans','Open_Sans',sans-serif]">
      <ArrangePanel />
      <DrumEditor />
      <TabBar />
      <TransportBar />
      <ExplorerStatus />
      <LogicalEditor />
    </main>
  );
}
